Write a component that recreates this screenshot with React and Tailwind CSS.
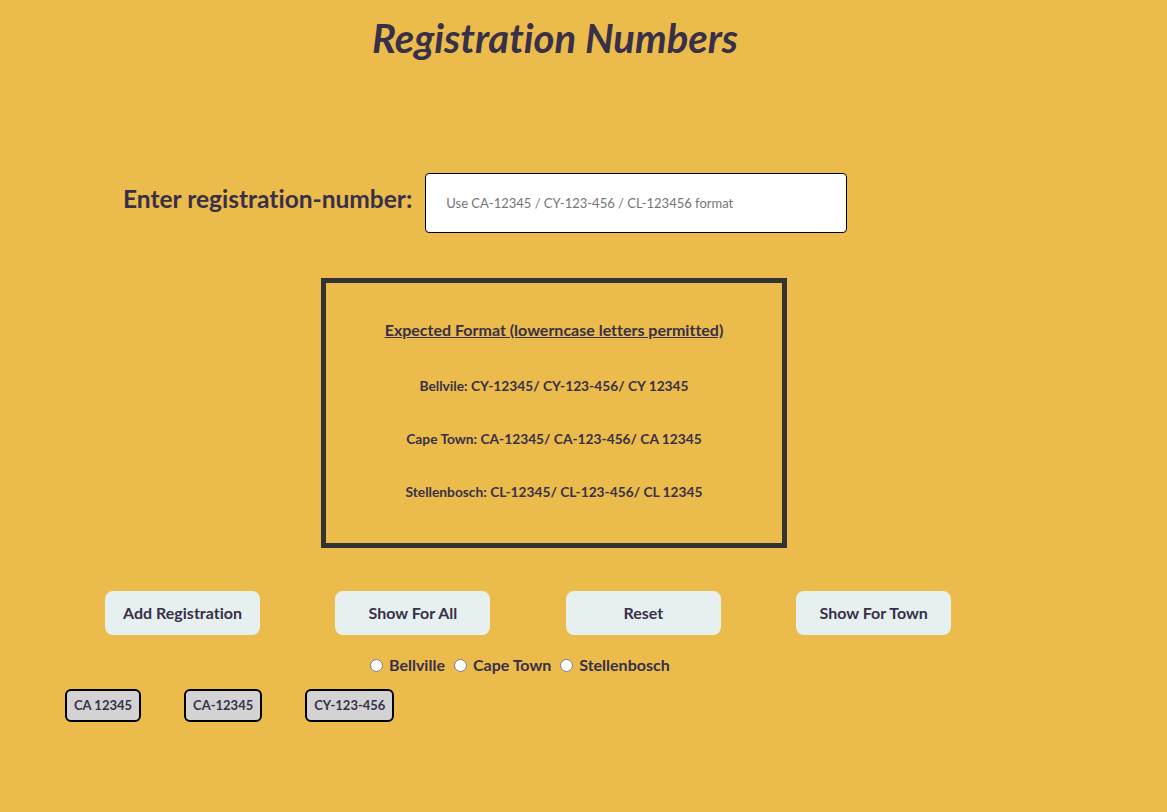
import React from "react";

const TOWNS = ["Bellville", "Cape Town", "Stellenbosch"];
const PLATES = ["CA 12345", "CA-12345", "CY-123-456"];
const FORMATS = [
  "Bellvile: CY-12345/ CY-123-456/ CY 12345",
  "Cape Town: CA-12345/ CA-123-456/ CA 12345",
  "Stellenbosch: CL-12345/ CL-123-456/ CL 12345",
];
const BUTTONS = ["Add Registration", "Show For All", "Reset", "Show For Town"];

export default function App() {
  return (
    <div
      className="min-h-screen bg-[#ebbb4b] text-[#383049] [font-variant-ligatures:none]"
      style={{ fontFamily: "Lato, 'Open Sans', sans-serif" }}
    >
      {/* HEADER */}
      <h1 className="w-[1110px] pt-[14px] text-center text-[40px] leading-[48px] font-bold italic">
        Registration Numbers
      </h1>

      {/* INPUT ROW */}
      <div className="mt-[111px] flex items-center pl-[123px]">
        <label className="text-[24.5px] leading-[30px] font-bold mr-[13px] -mt-[8px]">
          Enter registration-number:
        </label>
        <input
          type="text"
          placeholder="Use CA-12345 / CY-123-456 / CL-123456 format"
          className="w-[422px] h-[60px] bg-white border border-black rounded-[4px] pl-[20px] text-[13px] placeholder:text-[#757575] outline-none"
        />
      </div>

      {/* FORMAT BOX */}
      <div className="mt-[45px] ml-[321px] w-[466px] h-[270px] border-[5px] border-[#333333] flex flex-col items-center pt-[37px]">
        <p className="text-[16px] leading-[20px] font-bold underline">
          Expected Format (lowerncase letters permitted)
        </p>
        {FORMATS.map((f, i) => (
          <p
            key={f}
            className={`text-[13.75px] leading-[17px] font-bold ${i === 0 ? "mt-[37px]" : "mt-[36px]"}`}
          >
            {f}
          </p>
        ))}
      </div>

      {/* BUTTONS */}
      <div className="mt-[43px] flex gap-[75.4px] pl-[105px]">
        {BUTTONS.map((b) => (
          <button
            key={b}
            className="w-[155px] h-[44px] rounded-[8px] bg-[#e6f0ee] text-[16px] font-bold"
          >
            {b}
          </button>
        ))}
      </div>

      {/* RADIOS */}
      <div className="mt-[21px] flex items-center pl-[370px] text-[16px] leading-[18px] font-bold">
        {TOWNS.map((t) => (
          <label key={t} className="flex items-center mr-[9px]">
            <input type="radio" name="town" className="w-[13px] h-[13px] mr-[6px]" />
            {t}
          </label>
        ))}
      </div>

      {/* PLATES */}
      <div className="mt-[15px] flex gap-[43px] pl-[65px]">
        {PLATES.map((p) => (
          <span
            key={p}
            className="h-[33px] px-[7px] flex items-center rounded-[6px] border-2 border-black bg-[#d3d3d3] text-[13px] font-bold"
          >
            {p}
          </span>
        ))}
      </div>
    </div>
  );
}
